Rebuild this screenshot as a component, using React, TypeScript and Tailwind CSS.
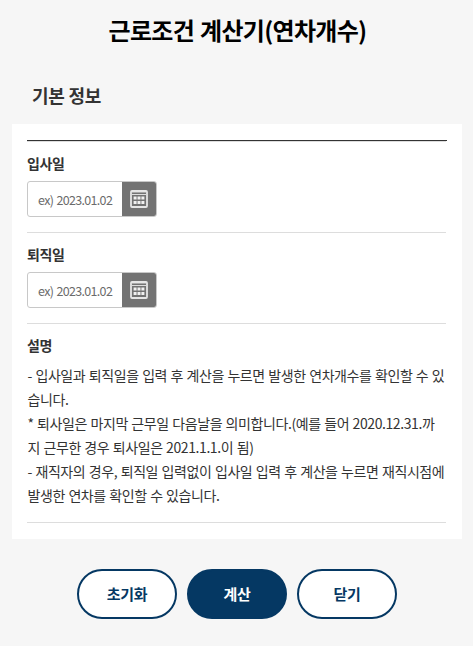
import { useState } from "react";

const description = [
    "- 입사일과 퇴직일을 입력 후 계산을 누르면 발생한 연차개수를 확인할 수 있",
    "습니다.",
    "* 퇴사일은 마지막 근무일 다음날을 의미합니다.(예를 들어 2020.12.31.까",
    "지 근무한 경우 퇴사일은 2021.1.1.이 됨)",
    "- 재직자의 경우, 퇴직일 입력없이 입사일 입력 후 계산을 누르면 재직시점에",
    "발생한 연차를 확인할 수 있습니다.",
];

function CalendarIcon() {
    return (
        <svg width="18" height="18" viewBox="0 0 18 18" fill="none">
            <rect x="1" y="1" width="16" height="16" rx="1" stroke="#e6e6e6" strokeWidth="1.8" />
            <path d="M2 2.5h14" stroke="#a8a8a8" strokeWidth="1" />
            <path d="M2 4.5h14" stroke="#dedede" strokeWidth="1" />
            <path
                d="M3.6 6.4h3v3h-3zM7.5 6.4h3v3h-3zM11.4 6.4h3v3h-3zM3.6 11h3v3h-3zM7.5 11h3v3h-3zM11.4 11h3v3h-3z"
                fill="#f0f0f0"
            />
        </svg>
    );
}

function DateField({ label, value, onChange }: { label: string; value: string; onChange: (v: string) => void }) {
    return (
        <div className="h-[91px] border-b border-[#dddddd] pt-3">
            <label className="block h-[27px] text-[14px] leading-[19px] font-bold">{label}</label>
            <div className="flex h-9 w-[130px] overflow-hidden rounded-[3px] border border-[#c8c8c8] bg-white">
                <input
                    type="text"
                    placeholder="ex) 2023.01.02"
                    value={value}
                    onChange={(e) => onChange(e.target.value)}
                    className="w-[94px] pt-[2px] pl-[10px] text-[12.5px] tracking-[-0.67px] [word-spacing:1px] outline-none placeholder:text-[#6b6b6b]"
                />
                <button type="button" className="flex flex-1 items-center justify-center bg-[#737373]">
                    <CalendarIcon />
                </button>
            </div>
        </div>
    );
}

export default function App() {
    const [joinDate, setJoinDate] = useState("");
    const [leaveDate, setLeaveDate] = useState("");

    const handleReset = () => {
        setJoinDate("");
        setLeaveDate("");
    };

    return (
        <div className="h-[646px] w-[473px] overflow-hidden bg-[#f6f6f6] font-['Noto_Sans_CJK_KR','Noto_Sans',sans-serif] tracking-[-0.35px] text-[#333333]">
            <h1 className="pt-[12px] pl-[2px] text-center text-[24px] leading-[35px] font-bold tracking-[-0.7px] [word-spacing:1.3px] text-black">
                근로조건 계산기(연차개수)
            </h1>
            <h2 className="mt-[34px] h-[43px] pl-8 text-[18px] leading-[28px] font-bold tracking-[-0.4px] [word-spacing:0.6px]">
                기본 정보
            </h2>

            <div className="ml-3 h-[415px] w-[450px] bg-white pt-4 pl-[15px]">
                <div className="w-[420px] border-t border-[#333333]">
                    <div className="w-[419px] border-t border-[#dddddd]">
                        <DateField label="입사일" value={joinDate} onChange={setJoinDate} />
                        <DateField label="퇴직일" value={leaveDate} onChange={setLeaveDate} />
                        <div className="h-[199px] border-b border-[#dddddd] pt-3">
                            <p className="h-[27px] text-[14px] leading-[19px] font-bold">설명</p>
                            <div className="pl-[0.5px] text-[14px] leading-[24px] tracking-[-0.41px] [word-spacing:0.75px] whitespace-nowrap">
                                {description.map((line) => (
                                    <p key={line}>{line}</p>
                                ))}
                            </div>
                        </div>
                    </div>
                </div>
            </div>

            <div className="mt-[30px] flex justify-center gap-[10px] text-[15px] font-bold text-[#053863]">
                <button
                    type="button"
                    onClick={handleReset}
                    className="h-[50px] w-[100px] rounded-full border-2 border-[#053863] bg-white pl-px"
                >
                    초기화
                </button>
                <button
                    type="button"
                    className="h-[50px] w-[100px] rounded-full border-2 border-[#053863] bg-[#053863] pl-px text-white"
                >
                    계산
                </button>
                <button
                    type="button"
                    className="h-[50px] w-[100px] rounded-full border-2 border-[#053863] bg-white pl-px"
                >
                    닫기
                </button>
            </div>
        </div>
    );
}
